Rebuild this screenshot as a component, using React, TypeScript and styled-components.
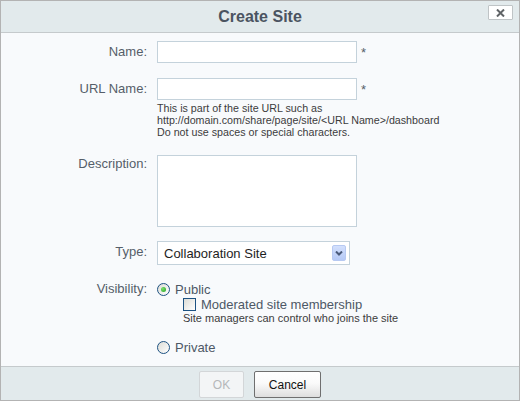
import React from "react";
import styled, { createGlobalStyle } from "styled-components";

const GlobalStyle = createGlobalStyle`
  body {
    margin: 0;
    background: #ffffff;
    font-family: "Liberation Sans", Arial, sans-serif;
  }
`;

const Dialog = styled.div`
  width: 520px;
  height: 401px;
  box-sizing: border-box;
  border: 1px solid #b3b3b3;
  display: flex;
  flex-direction: column;
  background: #f8fafc;
`;

const Header = styled.div`
  position: relative;
  height: 31px;
  flex-shrink: 0;
  display: flex;
  align-items: center;
  justify-content: center;
  background: #e2eaec;
  border-bottom: 1px solid #c5cacc;
`;

const Title = styled.h1`
  margin: 0;
  font-size: 16px;
  font-weight: bold;
  color: #4b5461;
`;

const CloseButton = styled.button`
  position: absolute;
  top: 4px;
  right: 6px;
  width: 25px;
  height: 15px;
  padding: 0;
  display: flex;
  align-items: center;
  justify-content: center;
  background: #ffffff;
  border: 1px solid #bfc4c6;
  border-radius: 1px;
`;

const Body = styled.div`
  flex: 1;
  padding-top: 8px;
`;

const Row = styled.div<{ $mt?: number }>`
  display: flex;
  align-items: flex-start;
  margin-top: ${(p) => p.$mt ?? 0}px;
`;

const Label = styled.label<{ $lh: number }>`
  width: 146px;
  flex-shrink: 0;
  margin-right: 10px;
  text-align: right;
  font-size: 13px;
  line-height: ${(p) => p.$lh}px;
  color: #555e69;
`;

const Field = styled.div`
  display: flex;
  flex-direction: column;
`;

const InputLine = styled.div`
  display: flex;
  align-items: center;
`;

const TextInput = styled.input`
  width: 200px;
  height: 22px;
  box-sizing: border-box;
  margin: 0;
  border: 1px solid #c4d2db;
  background: #ffffff;
  outline: none;
`;

const TextArea = styled.textarea`
  width: 200px;
  height: 72px;
  box-sizing: border-box;
  margin: 0;
  border: 1px solid #c4d2db;
  background: #ffffff;
  resize: none;
  outline: none;
`;

const Required = styled.span`
  margin-left: 4px;
  font-size: 13px;
  color: #555e69;
`;

const Help = styled.div<{ $mt?: number }>`
  margin-top: ${(p) => p.$mt ?? 0}px;
  font-size: 10.7px;
  line-height: 12px;
  color: #3c3c3c;
`;

const SelectBox = styled.div`
  width: 193px;
  height: 24px;
  box-sizing: border-box;
  display: flex;
  align-items: center;
  justify-content: space-between;
  padding: 0 3px 0 6px;
  border: 1px solid #c4d2db;
  background: #ffffff;
  font-size: 13px;
  color: #1e1e1e;
`;

const SelectArrow = styled.span`
  width: 14px;
  height: 16px;
  box-sizing: border-box;
  display: flex;
  align-items: center;
  justify-content: center;
  border: 1px solid #b7c9f2;
  border-radius: 2px;
  background: linear-gradient(#d3e0fd, #b5c9f6);
`;

const Option = styled.div<{ $indent?: number; $mt?: number; $lh: number }>`
  display: flex;
  align-items: center;
  gap: 5px;
  margin-left: ${(p) => p.$indent ?? 0}px;
  margin-top: ${(p) => p.$mt ?? 0}px;
  height: ${(p) => p.$lh}px;
  font-size: 13px;
  color: #4d5866;
`;

const Radio = styled.span<{ $checked?: boolean }>`
  width: 13px;
  height: 13px;
  box-sizing: border-box;
  display: flex;
  align-items: center;
  justify-content: center;
  border: 1px solid #1d5282;
  border-radius: 50%;
  background: linear-gradient(135deg, #dcdcd6, #ffffff);

  &::after {
    content: "";
    display: ${(p) => (p.$checked ? "block" : "none")};
    width: 5px;
    height: 5px;
    border-radius: 50%;
    background: radial-gradient(circle at 35% 35%, #7be06b, #21a121);
  }
`;

const Checkbox = styled.span`
  width: 13px;
  height: 13px;
  box-sizing: border-box;
  border: 1px solid #1d5282;
  background: linear-gradient(135deg, #dcdcd6, #ffffff);
`;

const SubHelp = styled(Help)`
  margin-left: 26px;
  font-size: 11px;
`;

const Footer = styled.div`
  height: 34px;
  flex-shrink: 0;
  display: flex;
  justify-content: center;
  align-items: flex-start;
  gap: 10px;
  padding-top: 4px;
  box-sizing: border-box;
  border-top: 1px solid #c5cacc;
  background: #e2eaec;
`;

const Button = styled.button<{ $disabled?: boolean; $w: number }>`
  width: ${(p) => p.$w}px;
  height: 27px;
  padding: 0;
  font-family: "Liberation Sans", Arial, sans-serif;
  font-size: 12px;
  border-radius: 2px;
  border: 1px solid ${(p) => (p.$disabled ? "#d3d6d8" : "#6f6f6f")};
  color: ${(p) => (p.$disabled ? "#b5b8ba" : "#111111")};
  background: ${(p) =>
    p.$disabled ? "#f3f5f6" : "linear-gradient(#ffffff, #fafafa 45%, #dedede)"};
`;

export default function App() {
  return (
    <>
      <GlobalStyle />
      <Dialog>
        <Header>
          <Title>Create Site</Title>
          <CloseButton aria-label="Close">
            <svg width="9" height="8" viewBox="0 0 9 8">
              <path d="M1 0.5 L8 7.5 M8 0.5 L1 7.5" stroke="#5f6366" strokeWidth="2" />
            </svg>
          </CloseButton>
        </Header>
        <Body>
          <Row>
            <Label $lh={22}>Name:</Label>
            <InputLine>
              <TextInput />
              <Required>*</Required>
            </InputLine>
          </Row>
          <Row $mt={15}>
            <Label $lh={22}>URL Name:</Label>
            <Field>
              <InputLine>
                <TextInput />
                <Required>*</Required>
              </InputLine>
              <Help $mt={2}>
                This is part of the site URL such as
                <br />
                http://domain.com/share/page/site/&lt;URL Name&gt;/dashboard
                <br />
                Do not use spaces or special characters.
              </Help>
            </Field>
          </Row>
          <Row $mt={17}>
            <Label $lh={18}>Description:</Label>
            <TextArea />
          </Row>
          <Row $mt={14}>
            <Label $lh={22}>Type:</Label>
            <SelectBox>
              Collaboration Site
              <SelectArrow>
                <svg width="8" height="5" viewBox="0 0 8 5">
                  <path d="M1 0.5 L4 3.5 L7 0.5" stroke="#4a5a7a" strokeWidth="2" fill="none" />
                </svg>
              </SelectArrow>
            </SelectBox>
          </Row>
          <Row $mt={16}>
            <Label $lh={16}>Visibility:</Label>
            <Field>
              <Option $lh={16}>
                <Radio $checked />
                Public
              </Option>
              <Option $lh={14} $indent={26}>
                <Checkbox />
                Moderated site membership
              </Option>
              <SubHelp $mt={1}>Site managers can control who joins the site</SubHelp>
              <Option $lh={16} $mt={15}>
                <Radio />
                Private
              </Option>
            </Field>
          </Row>
        </Body>
        <Footer>
          <Button $disabled $w={45}>OK</Button>
          <Button $w={67}>Cancel</Button>
        </Footer>
      </Dialog>
    </>
  );
}
